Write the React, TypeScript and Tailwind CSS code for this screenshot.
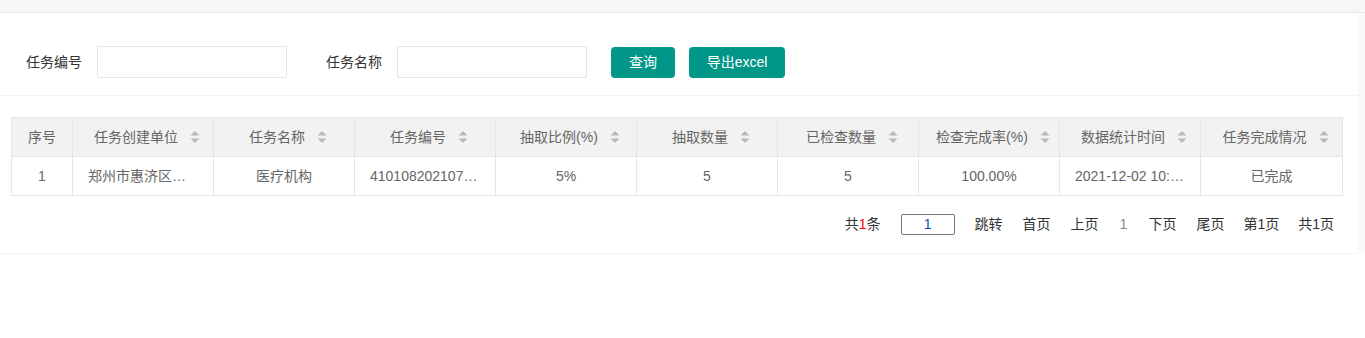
const columns = [
  { title: "序号", sort: false, w: "w-[61px]" },
  { title: "任务创建单位", sort: true, w: "w-[141px]" },
  { title: "任务名称", sort: true, w: "w-[141px]" },
  { title: "任务编号", sort: true, w: "w-[141px]" },
  { title: "抽取比例(%)", sort: true, w: "w-[141px]" },
  { title: "抽取数量", sort: true, w: "w-[141px]" },
  { title: "已检查数量", sort: true, w: "w-[141px]" },
  { title: "检查完成率(%)", sort: true, w: "w-[141px]" },
  { title: "数据统计时间", sort: true, w: "w-[141px]" },
  { title: "任务完成情况", sort: true, w: "w-[142px]" },
];

const row = [
  "1",
  "郑州市惠济区…",
  "医疗机构",
  "410108202107…",
  "5%",
  "5",
  "5",
  "100.00%",
  "2021-12-02 10:…",
  "已完成",
];

const SortIcon = () => (
  <svg width="10" height="14" viewBox="0 0 10 14" className="ml-[12px] shrink-0">
    <path d="M5 1 L9.5 5.5 H0.5 Z" fill="#b8b8b8" />
    <path d="M5 13 L9.5 8.5 H0.5 Z" fill="#b8b8b8" />
  </svg>
);

const App = () => {
  return (
    <div
      className="h-[338px] w-[1365px] bg-white text-[14px] text-[#666]"
      style={{ fontFamily: '"Liberation Sans", "Noto Sans CJK SC", sans-serif' }}
    >
      <div className="h-[13px] border-b border-[#e9e9e9] bg-[#f6f6f6]" />
      <div className="bg-[#f9f9f9]">
        <div className="w-[1358px] bg-white shadow-[0_1px_1px_rgba(0,0,0,0.04)]">
          <form className="flex h-[83px] items-center border-b border-[#f2f2f2] pt-[16px]">
            <label className="ml-[26px] w-[71px] text-[#333]">任务编号</label>
            <input className="h-[32px] w-[190px] rounded-[2px] border border-[#e6e6e6] outline-none" />
            <label className="ml-[39px] w-[71px] text-[#333]">任务名称</label>
            <input className="h-[32px] w-[190px] rounded-[2px] border border-[#e6e6e6] outline-none" />
            <button
              type="button"
              className="ml-[24px] h-[31px] w-[64px] rounded-[4px] bg-[#009688] text-[14px] text-white"
            >
              查询
            </button>
            <button
              type="button"
              className="ml-[14px] h-[31px] w-[96px] rounded-[4px] bg-[#009688] text-[14px] text-white"
            >
              导出excel
            </button>
          </form>
          <div className="px-[11px] pt-[21px]">
            <table className="w-[1331px] table-fixed border-collapse">
              <thead>
                <tr className="h-[39px] bg-[#f2f2f2]">
                  {columns.map((c) => (
                    <th key={c.title} className={`${c.w} border border-[#e6e6e6] p-0 font-normal`}>
                      <div
                        className={
                          c.sort ? "flex items-center justify-center pl-[8px]" : "flex items-center justify-center"
                        }
                      >
                        <span>{c.title}</span>
                        {c.sort && <SortIcon />}
                      </div>
                    </th>
                  ))}
                </tr>
              </thead>
              <tbody>
                <tr className="h-[39px]">
                  {row.map((v, i) => (
                    <td
                      key={i}
                      className={
                        v.endsWith("…")
                          ? "border border-[#e6e6e6] px-[15px] py-0 text-left"
                          : "border border-[#e6e6e6] p-0 text-center"
                      }
                    >
                      {v}
                    </td>
                  ))}
                </tr>
              </tbody>
            </table>
            <div className="flex h-[57px] items-center justify-end pr-[13px] text-[14px] text-[#333]">
              <span>
                共<span className="text-[#ff0000]">1</span>条
              </span>
              <input
                defaultValue="1"
                className="ml-[20px] h-[21px] w-[54px] rounded-[2px] border border-[#777] text-center text-[14px] text-[#0a57a6] outline-none"
              />
              <span className="ml-[20px]">跳转</span>
              <span className="ml-[20px]">首页</span>
              <span className="ml-[20px]">上页</span>
              <span className="ml-[21px] text-[#888]">1</span>
              <span className="ml-[21px]">下页</span>
              <span className="ml-[20px]">尾页</span>
              <span className="ml-[19px]">第1页</span>
              <span className="ml-[19px]">共1页</span>
            </div>
          </div>
        </div>
      </div>
    </div>
  );
};

export default App;
